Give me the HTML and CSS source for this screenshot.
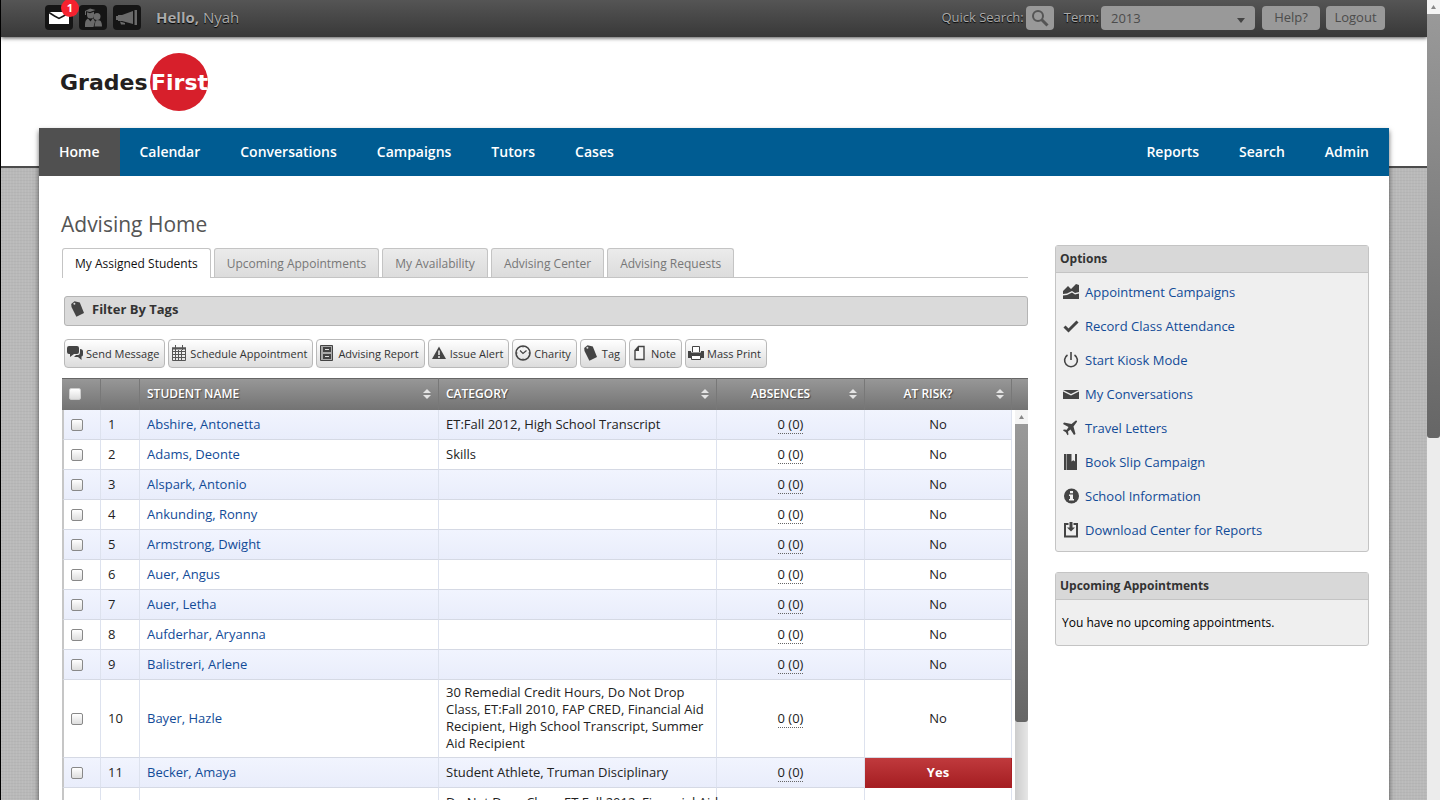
FILE: index.html
```
<!DOCTYPE html>
<html lang="en">

<head>
    <meta charset="UTF-8">
    <meta name="viewport" content="width=device-width, initial-scale=1.0">
    <title>Advising Home - GradesFirst</title>
    <link rel="stylesheet" href="styles.css">
</head>

<body>
    <!-- shared icons -->
    <svg class="sprite" aria-hidden="true">
        <symbol id="tag" viewBox="0 0 16 16">
            <path d="M1.200 3 4.500.2l5.300 1.300 4.200 10.500-7.600 3.800L1.500 6z" fill="#444" />
            <circle cx="4.400" cy="2.800" r="1" fill="#ddd" />
        </symbol>
        <symbol id="sort" viewBox="0 0 8 10">
            <path d="M4 0 8 4H0zM0 6h8l-4 4z" fill="#e4e4e4" />
        </symbol>
        <symbol id="up" viewBox="0 0 13 14">
            <path d="M6.500 5 9 9H4z" fill="#888" />
        </symbol>
    </svg>

    <div class="view">
        <header class="topbar">
            <button class="icon-btn" aria-label="Messages">
                <svg width="20" height="14" viewBox="0 0 20 14">
                    <path d="M0 1h20v12H0z" fill="#fff" />
                    <path d="M0 1.500 5.500 5 10 7.500 14.500 5 20 1.500" fill="none" stroke="#151515" stroke-width="1.500" />
                </svg>
                <span class="badge">1</span>
            </button>
            <button class="icon-btn" aria-label="Students">
                <svg width="18" height="20" viewBox="0 0 18 20" fill="#6a6a6a">
                    <path d="M1 3 6 .5 11.500 2 6 4zM1 3h1v4H1zM3 4.200 6 5.200l4-1.500V7a3.500 3.500 0 0 1-7 0z" />
                    <path d="M1 19c0-4 0-7 3-8.500l2.500 3L9 10l2 3.500L9.500 19z" />
                    <circle cx="13" cy="8.500" r="3.500" />
                    <path d="M11.500 13 13 12l3 .5c1.500 1 2 3.500 2 6h-7.500z" />
                </svg>
            </button>
            <button class="icon-btn" aria-label="Announcements">
                <svg width="22" height="16" viewBox="0 0 22 16" fill="#6a6a6a">
                    <path d="M0 6h2V5h4l11-4v13L6 11H2v-1H0zM18.500 0H21v15h-2.500zM4 11.500l5 1.500v1.500H5z" />
                </svg>
            </button>
            <div class="hello"><b>Hello,</b> Nyah</div>
            <label class="top-label" for="quick">Quick Search:</label>
            <button class="top-btn search-btn" id="quick" aria-label="Quick Search">
                <svg width="18" height="18" viewBox="0 0 18 18" fill="none" stroke="#555">
                    <circle cx="7" cy="7" r="5" stroke-width="2" />
                    <path d="m10.500 10.500 6 6" stroke-width="3" />
                </svg>
            </button>
            <label class="top-label term-label" for="term">Term:</label>
            <select class="term" id="term">
                <option>2013</option>
            </select>
            <button class="top-btn help">Help?</button>
            <button class="top-btn logout">Logout</button>
        </header>

        <div class="brand">
            <svg width="150" height="60" viewBox="0 0 150 60" role="img" aria-label="GradesFirst">
                <circle cx="118" cy="29" r="29" fill="#d71f2b" />
                <text class="logo-text" x="-1" y="37" fill="#231f20">Grades</text>
                <text class="logo-text" x="90" y="37" fill="#fff">First</text>
            </svg>
        </div>

        <div class="container">
            <nav class="nav">
                <a href="#" class="active">Home</a>
                <a href="#">Calendar</a>
                <a href="#">Conversations</a>
                <a href="#">Campaigns</a>
                <a href="#">Tutors</a>
                <a href="#">Cases</a>
                <a href="#" class="push">Reports</a>
                <a href="#">Search</a>
                <a href="#">Admin</a>
            </nav>

            <div class="content">
                <main class="main">
                    <h1>Advising Home</h1>
                    <div class="tabs">
                        <button class="tab selected">My Assigned Students</button>
                        <button class="tab">Upcoming Appointments</button>
                        <button class="tab">My Availability</button>
                        <button class="tab">Advising Center</button>
                        <button class="tab">Advising Requests</button>
                    </div>

                    <button class="filter">
                        <svg width="16" height="16"><use href="#tag" /></svg>
                        Filter By Tags
                    </button>

                    <div class="actions">
                        <button class="action">
                            <svg width="16" height="16" viewBox="0 0 16 16" fill="#444">
                                <path d="M2 1h8q2 0 2 2v4q0 2-2 2H7l-4 3V9H2Q0 9 0 7V3q0-2 2-2z" />
                                <path d="M13 4q3 0 3 2.500v3q0 2-1.500 2V15l-3.500-3H7l2-2h2q2 0 2-3z" />
                            </svg>
                            Send Message
                        </button>
                        <button class="action">
                            <svg width="16" height="16" viewBox="0 0 16 16" fill="none" stroke="#555">
                                <path d="M1.500 3v12.500h13V3M1 3h14" />
                                <path d="M1 3.500h14" stroke-width="2" />
                                <path d="M4.500 0v5M11.500 0v5M4.500 5v10M7.500 5v10M10.500 5v10M2 6.500h12M2 9.500h12M2 12.500h12" />
                            </svg>
                            Schedule Appointment
                        </button>
                        <button class="action">
                            <svg width="16" height="16" viewBox="0 0 16 16">
                                <path d="M1.500.5h12v15h-12z" fill="#aaa" stroke="#444" />
                                <path d="M4 2h8v5H4zM4 9h8v5H4z" fill="#444" />
                                <path d="M6 4.500h4M6 11.500h4" stroke="#ddd" />
                            </svg>
                            Advising Report
                        </button>
                        <button class="action">
                            <svg width="16" height="16" viewBox="0 0 16 16">
                                <path d="M8 1.500 15 14H1z" fill="#444" />
                                <path d="M8 5.500v4.500M8 11v2" stroke="#eee" stroke-width="1.500" />
                            </svg>
                            Issue Alert
                        </button>
                        <button class="action">
                            <svg width="16" height="16" viewBox="0 0 16 16" fill="none" stroke="#444">
                                <circle cx="8" cy="8" r="7" stroke-width="1.600" />
                                <path d="m5 5.500 3 3 3.500-3" stroke-width="1.200" />
                                <path d="M8 1v1.500M8 13.500V15M1 8h1.500M13.500 8H15" />
                            </svg>
                            Charity
                        </button>
                        <button class="action">
                            <svg width="16" height="16"><use href="#tag" /></svg>
                            Tag
                        </button>
                        <button class="action">
                            <svg width="16" height="16" viewBox="0 0 16 16">
                                <path d="M6.500 1.500H12v13H3V5.500z" fill="#f6f6f6" stroke="#444" stroke-width="1.400" />
                                <path d="M7 1v5H2.500z" fill="#444" />
                            </svg>
                            Note
                        </button>
                        <button class="action">
                            <svg width="16" height="16" viewBox="0 0 16 16">
                                <path d="M4.500 7V1.500h7V7" fill="#fff" stroke="#444" />
                                <path d="M0 6h3v1.500h10V6h3v7H0z" fill="#444" />
                                <path d="M3.500 10.500h9v4h-9z" fill="#fff" stroke="#444" />
                            </svg>
                            Mass Print
                        </button>
                    </div>

                    <div class="grid">
                        <table class="students">
                            <thead>
                                <tr>
                                    <th class="col-check"><input type="checkbox" aria-label="Select all"></th>
                                    <th class="col-num"></th>
                                    <th class="col-name"><button class="sort">STUDENT NAME <svg width="8" height="10"><use href="#sort" /></svg></button></th>
                                    <th class="col-cat"><button class="sort">CATEGORY <svg width="8" height="10"><use href="#sort" /></svg></button></th>
                                    <th class="col-abs"><button class="sort centered"><span>ABSENCES</span> <svg width="8" height="10"><use href="#sort" /></svg></button></th>
                                    <th class="col-risk"><button class="sort centered"><span>AT RISK?</span> <svg width="8" height="10"><use href="#sort" /></svg></button></th>
                                </tr>
                            </thead>
                            <tbody>
                                <tr>
                                    <td><input type="checkbox" aria-label="Select Abshire, Antonetta"></td>
                                    <td>1</td>
                                    <td><a href="#">Abshire, Antonetta</a></td>
                                    <td>ET:Fall 2012, High School Transcript</td>
                                    <td class="mid"><span class="abs">0 (0)</span></td>
                                    <td class="mid">No</td>
                                </tr>
                                <tr>
                                    <td><input type="checkbox" aria-label="Select Adams, Deonte"></td>
                                    <td>2</td>
                                    <td><a href="#">Adams, Deonte</a></td>
                                    <td>Skills</td>
                                    <td class="mid"><span class="abs">0 (0)</span></td>
                                    <td class="mid">No</td>
                                </tr>
                                <tr>
                                    <td><input type="checkbox" aria-label="Select Alspark, Antonio"></td>
                                    <td>3</td>
                                    <td><a href="#">Alspark, Antonio</a></td>
                                    <td></td>
                                    <td class="mid"><span class="abs">0 (0)</span></td>
                                    <td class="mid">No</td>
                                </tr>
                                <tr>
                                    <td><input type="checkbox" aria-label="Select Ankunding, Ronny"></td>
                                    <td>4</td>
                                    <td><a href="#">Ankunding, Ronny</a></td>
                                    <td></td>
                                    <td class="mid"><span class="abs">0 (0)</span></td>
                                    <td class="mid">No</td>
                                </tr>
                                <tr>
                                    <td><input type="checkbox" aria-label="Select Armstrong, Dwight"></td>
                                    <td>5</td>
                                    <td><a href="#">Armstrong, Dwight</a></td>
                                    <td></td>
                                    <td class="mid"><span class="abs">0 (0)</span></td>
                                    <td class="mid">No</td>
                                </tr>
                                <tr>
                                    <td><input type="checkbox" aria-label="Select Auer, Angus"></td>
                                    <td>6</td>
                                    <td><a href="#">Auer, Angus</a></td>
                                    <td></td>
                                    <td class="mid"><span class="abs">0 (0)</span></td>
                                    <td class="mid">No</td>
                                </tr>
                                <tr>
                                    <td><input type="checkbox" aria-label="Select Auer, Letha"></td>
                                    <td>7</td>
                                    <td><a href="#">Auer, Letha</a></td>
                                    <td></td>
                                    <td class="mid"><span class="abs">0 (0)</span></td>
                                    <td class="mid">No</td>
                                </tr>
                                <tr>
                                    <td><input type="checkbox" aria-label="Select Aufderhar, Aryanna"></td>
                                    <td>8</td>
                                    <td><a href="#">Aufderhar, Aryanna</a></td>
                                    <td></td>
                                    <td class="mid"><span class="abs">0 (0)</span></td>
                                    <td class="mid">No</td>
                                </tr>
                                <tr>
                                    <td><input type="checkbox" aria-label="Select Balistreri, Arlene"></td>
                                    <td>9</td>
                                    <td><a href="#">Balistreri, Arlene</a></td>
                                    <td></td>
                                    <td class="mid"><span class="abs">0 (0)</span></td>
                                    <td class="mid">No</td>
                                </tr>
                                <tr>
                                    <td><input type="checkbox" aria-label="Select Bayer, Hazle"></td>
                                    <td>10</td>
                                    <td><a href="#">Bayer, Hazle</a></td>
                                    <td>30 Remedial Credit Hours, Do Not Drop Class, ET:Fall 2010, FAP CRED, Financial Aid Recipient, High School Transcript, Summer Aid Recipient</td>
                                    <td class="mid"><span class="abs">0 (0)</span></td>
                                    <td class="mid">No</td>
                                </tr>
                                <tr>
                                    <td><input type="checkbox" aria-label="Select Becker, Amaya"></td>
                                    <td>11</td>
                                    <td><a href="#">Becker, Amaya</a></td>
                                    <td>Student Athlete, Truman Disciplinary</td>
                                    <td class="mid"><span class="abs">0 (0)</span></td>
                                    <td class="mid risk">Yes</td>
                                </tr>
                                <tr>
                                    <td></td>
                                    <td></td>
                                    <td></td>
                                    <td class="one-line">Do Not Drop Class, ET:Fall 2012, Financial Aid</td>
                                    <td></td>
                                    <td></td>
                                </tr>
                            </tbody>
                        </table>
                        <div class="grid-side">
                            <div class="grid-corner"></div>
                            <div class="scroll grid-scroll">
                                <svg width="13" height="14"><use href="#up" /></svg>
                                <div class="thumb"></div>
                            </div>
                        </div>
                    </div>
                </main>

                <aside class="sidebar">
                    <section class="panel">
                        <h2>Options</h2>
                        <ul class="options">
                            <li><a href="#">
                                <svg width="16" height="16" viewBox="0 0 16 16" fill="#444">
                                    <path d="M0 7 5 2l3 3 5-5 3 1v7l-4 1-3-2-5 2.500L0 10z" />
                                    <path d="m0 11.500 4-.5 5-2.500 3 2 4-1V15H0z" />
                                </svg>
                                Appointment Campaigns</a></li>
                            <li><a href="#">
                                <svg width="16" height="16" viewBox="0 0 16 16">
                                    <path d="m1.500 8.500 4 4 9-9" fill="none" stroke="#444" stroke-width="3" />
                                </svg>
                                Record Class Attendance</a></li>
                            <li><a href="#">
                                <svg width="16" height="16" viewBox="0 0 16 16" fill="none" stroke="#444" stroke-width="1.600">
                                    <path d="M4.500 3a6.400 6.400 0 1 0 7 0M8 0v8" />
                                </svg>
                                Start Kiosk Mode</a></li>
                            <li><a href="#">
                                <svg width="16" height="16" viewBox="0 0 16 16" fill="#444">
                                    <path d="M0 4h16L8 8zM0 5.500 8 9.500l8-4V13H0z" />
                                </svg>
                                My Conversations</a></li>
                            <li><a href="#">
                                <svg width="16" height="16" viewBox="0 0 16 16" fill="#444">
                                    <path d="M12.500.8c1-.8 2 .2 1.300 1.300L10.500 6.500 12.500 14l-1.500 1-3.500-5.500-2.500 2 .5 3-1 .7-1.700-2.900L0 10.500l.8-1 3 .3 1.700-2.800L0 4l1-1.500 7.500 1.500z" />
                                </svg>
                                Travel Letters</a></li>
                            <li><a href="#">
                                <svg width="16" height="16" viewBox="0 0 16 16">
                                    <path d="M1 0h13v16H1z" fill="#444" />
                                    <path d="M3.500 0v16" stroke="#999" />
                                    <path d="M8.500 0H12v7.500l-1.700-1.200-1.800 1.200z" fill="#efefef" />
                                </svg>
                                Book Slip Campaign</a></li>
                            <li><a href="#">
                                <svg width="16" height="16" viewBox="0 0 16 16">
                                    <circle cx="8.500" cy="8" r="7.500" fill="#444" />
                                    <path d="M7 3h3v2.200H7zM6 6.500h4V11h1v1.500H6V11h1V8H6z" fill="#efefef" />
                                </svg>
                                School Information</a></li>
                            <li><a href="#">
                                <svg width="16" height="16" viewBox="0 0 16 16">
                                    <path d="M5.500 2H2v12.500h12V2h-3.500" fill="none" stroke="#444" stroke-width="2" />
                                    <path d="M6.500 0h3v5.500H12l-4 4-4-4h2.500z" fill="#444" />
                                </svg>
                                Download Center for Reports</a></li>
                        </ul>
                    </section>
                    <section class="panel">
                        <h2>Upcoming Appointments</h2>
                        <p>You have no upcoming appointments.</p>
                    </section>
                </aside>
            </div>
        </div>
    </div>

    <div class="scroll page-scroll">
        <svg width="13" height="14"><use href="#up" /></svg>
        <div class="thumb"></div>
    </div>
</body>

</html>
```
FILE: styles.css
```
* {
    box-sizing: border-box;
}

body {
    margin: 0;
    display: flex;
    height: 100vh;
    overflow: hidden;
    font-family: "Open Sans", sans-serif;
    font-size: 13px;
    line-height: 17px;
    color: #222;
    background: #fff;
}

button,
select {
    font-family: inherit;
    cursor: pointer;
}

a {
    color: #124b97;
    text-decoration: none;
}

svg {
    flex: none;
}

.sprite {
    display: none;
}

.view {
    flex: 1;
    display: flex;
    flex-direction: column;
    overflow: hidden;
    border-left: 1px solid #000;
    background:
        linear-gradient(#fff 166px, #4c4c4c 166px, #4c4c4c 168px, transparent 168px),
        repeating-linear-gradient(90deg, rgba(255, 255, 255, 0.06) 0 1px, transparent 1px 3px),
        repeating-linear-gradient(rgba(0, 0, 0, 0.03) 0 1px, transparent 1px 3px),
        #b9b9b9;
}

/* top bar */
.topbar {
    flex: none;
    display: flex;
    align-items: center;
    height: 37px;
    padding: 0 42px 2px 44px;
    background: linear-gradient(#555, #383838);
    box-shadow: 0 1px 4px rgba(0, 0, 0, 0.7);
    color: #aaa;
    text-shadow: 0 1px 1px #000;
}

.icon-btn {
    position: relative;
    display: flex;
    align-items: center;
    justify-content: center;
    width: 28px;
    height: 25px;
    margin-right: 6px;
    padding: 0;
    border: none;
    border-radius: 4px;
    background: #151515;
}

.badge {
    position: absolute;
    top: -6px;
    right: -6px;
    width: 18px;
    height: 18px;
    border-radius: 50%;
    background: #f5222f;
    color: #fff;
    font-size: 11px;
    font-weight: 700;
    line-height: 18px;
}

.hello {
    margin-left: 9px;
    margin-right: auto;
    font-size: 15px;
}

.top-label {
    font-size: 13px;
}

.term-label {
    margin-left: 10px;
}

.top-btn,
.term {
    height: 24px;
    border: none;
    border-radius: 4px;
    background-color: #999;
    color: #4c4c4c;
    font-size: 13px;
}

.top-btn {
    padding: 0 0 2px;
}

.search-btn {
    display: flex;
    align-items: center;
    justify-content: center;
    width: 28px;
    margin-left: 2px;
    padding: 0;
}

.term {
    appearance: none;
    width: 154px;
    margin-left: 2px;
    padding: 0 10px;
    background-image: url("data:image/svg+xml,%3Csvg xmlns='http://www.w3.org/2000/svg' width='8' height='5'%3E%3Cpath d='M0 0h8L4 5z' fill='%23444'/%3E%3C/svg%3E");
    background-repeat: no-repeat;
    background-position: right 10px top 12px;
}

.help {
    width: 58px;
    margin-left: 7px;
}

.logout {
    width: 59px;
    margin-left: 6px;
}

.brand {
    flex: none;
    height: 91px;
    padding: 16px 60px 0;
}

.brand svg {
    overflow: visible;
}

.logo-text {
    font-family: "DejaVu Sans", sans-serif;
    font-size: 22px;
    font-weight: 700;
}

/* page */
.container {
    flex: 1;
    margin: 0 38px;
    background: #fff;
    box-shadow: 0 3px 5px rgba(0, 0, 0, 0.6);
}

.nav {
    display: flex;
    height: 48px;
    background: #005c92;
}

.nav a {
    padding: 0 20px;
    color: #fff;
    font-size: 14px;
    font-weight: 600;
    line-height: 48px;
}

.nav .active {
    background: #505050;
}

.nav .push {
    margin-left: auto;
}

.content {
    display: flex;
    gap: 27px;
    padding: 33px 20px 0 22px;
}

.main {
    flex: 1;
}

h1 {
    margin: 0 0 9px;
    font-size: 21px;
    font-weight: 400;
    line-height: 30px;
    color: #555;
}

.tabs {
    display: flex;
    gap: 3px;
    height: 30px;
    margin-left: 1px;
    border-bottom: 1px solid #c4c4c4;
}

.tab {
    height: 29px;
    padding: 0 12px;
    border: 1px solid #c4c4c4;
    border-bottom: none;
    border-radius: 3px 3px 0 0;
    background: linear-gradient(#ebebeb, #dcdcdc);
    color: #777;
    font-size: 12px;
}

.tab.selected {
    height: 30px;
    background: #fff;
    color: #111;
}

.filter {
    display: flex;
    gap: 6px;
    width: calc(100% - 3px);
    height: 30px;
    margin: 18px 0 13px 3px;
    padding: 4px 5px;
    border: 1px solid #b4b4b4;
    border-radius: 3px;
    background: #dadada;
    color: #333;
    font-size: 13px;
    font-weight: 700;
    line-height: 17px;
}

.actions {
    display: flex;
    gap: 3px;
    margin-left: 3px;
}

.action {
    display: flex;
    align-items: center;
    gap: 3px;
    height: 29px;
    padding: 0 5px 1px 2px;
    border: 1px solid #b9b9b9;
    border-radius: 4px;
    background: linear-gradient(#fff, #dcdcdc);
    color: #333;
    font-size: 11px;
}

/* student table */
.grid {
    display: flex;
    margin: 10px 0 0 1px;
}

.students {
    flex: 1;
    table-layout: fixed;
    width: 100%;
    border-collapse: separate;
    border-spacing: 0;
}

.col-check {
    width: 39px;
}

.col-num {
    width: 39px;
}

.col-name {
    width: 299px;
}

.col-abs {
    width: 148px;
}

.col-risk {
    width: 147px;
}

.students th,
.grid-corner {
    height: 32px;
    padding: 0 7px 2px;
    border-top: 1px solid #666;
    border-right: 1px solid #787878;
    background: linear-gradient(#979797, #737373);
    text-align: left;
}

.sort {
    display: flex;
    align-items: center;
    justify-content: space-between;
    width: 100%;
    padding: 0;
    border: none;
    background: none;
    color: #fff;
    font-size: 12px;
    font-weight: 600;
    text-shadow: 1px 1px 1px #444;
}

.sort.centered span {
    flex: 1;
    margin-right: 12px;
}

.students td {
    height: 30px;
    padding: 4px 7px 5px;
    border-right: 1px solid #dde2ee;
    border-bottom: 1px solid #d5d9e4;
}

.students td:first-child {
    border-left: 2px solid #c6c6c6;
}

.students tbody .one-line {
    padding-right: 0;
    white-space: nowrap;
}

.students tr:nth-child(odd) td {
    background: linear-gradient(#f1f4fe, #e9edfb);
}

.students tbody tr:nth-child(even) td {
    background: #fff;
}

.students input {
    appearance: none;
    display: block;
    width: 12px;
    height: 12px;
    margin: 1px 0 0;
    border: 1px solid #888;
    border-radius: 2px;
    background: linear-gradient(#fff, #ddd);
}

.students th input {
    border-color: #ccc;
}

.students .mid {
    text-align: center;
}

.abs {
    border-bottom: 1px dotted #666;
}

.students tbody .risk.risk {
    border-color: #a81f24;
    background: linear-gradient(#c03a3d, #a51e22);
    color: #fff;
    font-weight: 700;
}

.grid-side {
    display: flex;
    flex-direction: column;
    align-items: flex-end;
    width: 16px;
}

.grid-corner {
    width: 100%;
    border-right: none;
}

/* scrollbars */
.scroll {
    display: flex;
    flex-direction: column;
    width: 13px;
    background: linear-gradient(90deg, #ccc, #e6e6e6);
}

.scroll svg {
    background: #f4f4f4;
}

.grid-scroll {
    flex: 1;
}

.thumb {
    height: 298px;
    border-radius: 0 0 3px 3px;
    background: linear-gradient(#999, #666);
}

.page-scroll {
    background: #ececec;
}

.page-scroll .thumb {
    height: 53%;
}

/* sidebar */
.sidebar {
    width: 314px;
    margin-top: 36px;
}

.panel {
    margin-bottom: 20px;
    border: 1px solid #c4c4c4;
    border-radius: 3px;
    background: #efefef;
}

.panel h2 {
    margin: 0;
    padding: 0 4px;
    border-bottom: 1px solid #c4c4c4;
    background: #d8d8d8;
    color: #333;
    font-size: 12px;
    font-weight: 700;
    line-height: 26px;
}

.panel p {
    margin: 0;
    padding: 14px 6px;
    color: #000;
    font-size: 12px;
}

.options {
    margin: 0;
    padding: 2px 7px 4px;
    list-style: none;
}

.options a {
    display: flex;
    align-items: center;
    gap: 6px;
    height: 34px;
}
```
